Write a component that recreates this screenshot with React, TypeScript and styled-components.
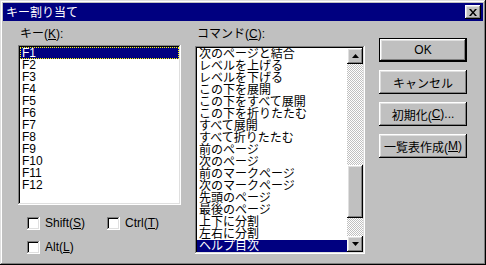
import styled, { createGlobalStyle } from "styled-components";

const GlobalStyle = createGlobalStyle`
  body {
    margin: 0;
    background: #c0c0c0;
    font-family: "Liberation Sans", "Noto Sans CJK JP", sans-serif;
    font-size: 12px;
  }
`;

const keys = ["F1", "F2", "F3", "F4", "F5", "F6", "F7", "F8", "F9", "F10", "F11", "F12"];

const commands = [
  "次のページと結合",
  "レベルを上げる",
  "レベルを下げる",
  "この下を展開",
  "この下をすべて展開",
  "この下を折りたたむ",
  "すべて展開",
  "すべて折りたたむ",
  "前のページ",
  "次のページ",
  "前のマークページ",
  "次のマークページ",
  "先頭のページ",
  "最後のページ",
  "上下に分割",
  "左右に分割",
  "ヘルプ目次",
];

const raised = `
  box-shadow: inset -1px -1px #000, inset 1px 1px #fff, inset -2px -2px #808080, inset 2px 2px #dfdfdf;
`;

const sunken = `
  box-shadow: inset -1px -1px #fff, inset 1px 1px #808080, inset -2px -2px #dfdfdf, inset 2px 2px #000;
`;

export default function App() {
  return (
    <>
      <GlobalStyle />
      <Window>
        <TitleBar>
          <TitleText>キー割り当て</TitleText>
          <CloseButton>
            <svg width="8" height="7" viewBox="0 0 8 7">
              <path d="M0 0h2l2 2.5L6 0h2L5 3.5 8 7H6L4 4.5 2 7H0l3-3.5z" fill="#000" />
            </svg>
          </CloseButton>
        </TitleBar>
        <Body>
          <KeyColumn>
            <Label>
              キー(<u>K</u>):
            </Label>
            <ListBox $height={160}>
              {keys.map((k, i) => (
                <Item key={k} $selected={i === 0} $focused={i === 0}>
                  {k}
                </Item>
              ))}
            </ListBox>
            <Checks>
              <CheckRow>
                <CheckItem $width={80}>
                  <CheckBox />
                  <span>
                    Shift(<u>S</u>)
                  </span>
                </CheckItem>
                <CheckItem>
                  <CheckBox />
                  <span>
                    Ctrl(<u>T</u>)
                  </span>
                </CheckItem>
              </CheckRow>
              <CheckRow>
                <CheckItem>
                  <CheckBox />
                  <span>
                    Alt(<u>L</u>)
                  </span>
                </CheckItem>
              </CheckRow>
            </Checks>
          </KeyColumn>
          <CommandColumn>
            <Label $gap={1}>
              コマンド(<u>C</u>):
            </Label>
            <ListBox $height={208}>
              <ListRow>
                <Items>
                  {commands.map((c, i) => (
                    <Item key={c} $selected={i === commands.length - 1}>
                      {c}
                    </Item>
                  ))}
                </Items>
                <ScrollBar>
                  <ArrowButton>
                    <svg width="7" height="4" viewBox="0 0 7 4">
                      <path d="M3.5 0L7 4H0z" fill="#000" />
                    </svg>
                  </ArrowButton>
                  <Track>
                    <Thumb $top={101} $size={53} />
                  </Track>
                  <ArrowButton>
                    <svg width="7" height="4" viewBox="0 0 7 4">
                      <path d="M0 0h7L3.5 4z" fill="#000" />
                    </svg>
                  </ArrowButton>
                </ScrollBar>
              </ListRow>
            </ListBox>
          </CommandColumn>
          <Buttons>
            <Button $default>OK</Button>
            <Button>キャンセル</Button>
            <Button>
              初期化(<u>C</u>)...
            </Button>
            <Button>
              一覧表作成(<u>M</u>)
            </Button>
          </Buttons>
        </Body>
      </Window>
    </>
  );
}

const Window = styled.div`
  width: 486px;
  height: 265px;
  box-sizing: border-box;
  padding: 3px;
  background: #c0c0c0;
  box-shadow: inset -1px -1px #000, inset 1px 1px #dfdfdf, inset -2px -2px #808080, inset 2px 2px #fff;
  display: flex;
  flex-direction: column;
  color: #000;
`;

const TitleBar = styled.div`
  height: 18px;
  background: #000080;
  display: flex;
  align-items: center;
  justify-content: space-between;
  padding: 0 2px 0 3px;
`;

const TitleText = styled.span`
  color: #fff;
  font-family: "Noto Sans CJK JP", sans-serif;
  font-size: 12px;
  line-height: 12px;
`;

const CloseButton = styled.div`
  width: 16px;
  height: 14px;
  background: #c0c0c0;
  ${raised}
  display: flex;
  align-items: center;
  justify-content: center;
  svg {
    margin-left: -1px;
  }
`;

const Body = styled.div`
  display: flex;
  padding: 7px 0 0 15px;
  gap: 14px;
`;

const KeyColumn = styled.div`
  width: 163px;
  display: flex;
  flex-direction: column;
`;

const CommandColumn = styled.div`
  width: 170px;
  display: flex;
  flex-direction: column;
`;

const Label = styled.div<{ $gap?: number }>`
  height: 17px;
  margin-bottom: ${(p) => p.$gap ?? 0}px;
  padding-left: 2px;
  line-height: 13px;
  white-space: nowrap;
`;

const ListBox = styled.div<{ $height: number }>`
  height: ${(p) => p.$height}px;
  box-sizing: border-box;
  padding: 2px;
  background: #fff;
  ${sunken}
  overflow: hidden;
`;

const ListRow = styled.div`
  display: flex;
  height: 100%;
`;

const Items = styled.div`
  flex: 1;
  overflow: hidden;
`;

const Item = styled.div<{ $selected?: boolean; $focused?: boolean }>`
  height: 12px;
  line-height: 12px;
  padding-left: 2px;
  white-space: nowrap;
  font-family: "Liberation Sans", "Noto Sans CJK JP", sans-serif;
  background: ${(p) => (p.$selected ? "#000080" : "transparent")};
  color: ${(p) => (p.$selected ? "#fff" : "#000")};
  outline: ${(p) => (p.$focused ? "1px dotted #ffff00" : "none")};
  outline-offset: -1px;
`;

const ScrollBar = styled.div`
  width: 16px;
  display: flex;
  flex-direction: column;
`;

const ArrowButton = styled.div`
  width: 16px;
  height: 16px;
  flex: none;
  background: #c0c0c0;
  ${raised}
  display: flex;
  align-items: center;
  justify-content: center;
`;

const Track = styled.div`
  flex: 1;
  background: repeating-conic-gradient(#c0c0c0 0 25%, #fff 0 50%) 0 0 / 2px 2px;
`;

const Thumb = styled.div<{ $top: number; $size: number }>`
  margin-top: ${(p) => p.$top}px;
  height: ${(p) => p.$size}px;
  background: #c0c0c0;
  ${raised}
`;

const Checks = styled.div`
  display: flex;
  flex-direction: column;
  gap: 11px;
  margin-top: 12px;
  padding-left: 9px;
`;

const CheckRow = styled.div`
  display: flex;
`;

const CheckItem = styled.label<{ $width?: number }>`
  display: flex;
  align-items: center;
  gap: 5px;
  height: 13px;
  width: ${(p) => (p.$width ? `${p.$width}px` : "auto")};
  line-height: 13px;
  white-space: nowrap;
`;

const CheckBox = styled.span`
  width: 13px;
  height: 13px;
  flex: none;
  box-sizing: border-box;
  background: #fff;
  ${sunken}
`;

const Buttons = styled.div`
  display: flex;
  flex-direction: column;
  gap: 8px;
  padding-top: 10px;
`;

const Button = styled.div<{ $default?: boolean }>`
  width: 88px;
  height: 24px;
  box-sizing: border-box;
  display: flex;
  align-items: center;
  justify-content: center;
  background: #c0c0c0;
  border: ${(p) => (p.$default ? "1px solid #000" : "none")};
  ${raised}
  white-space: nowrap;
  font-family: "Liberation Sans", "Noto Sans CJK JP", sans-serif;
`;
